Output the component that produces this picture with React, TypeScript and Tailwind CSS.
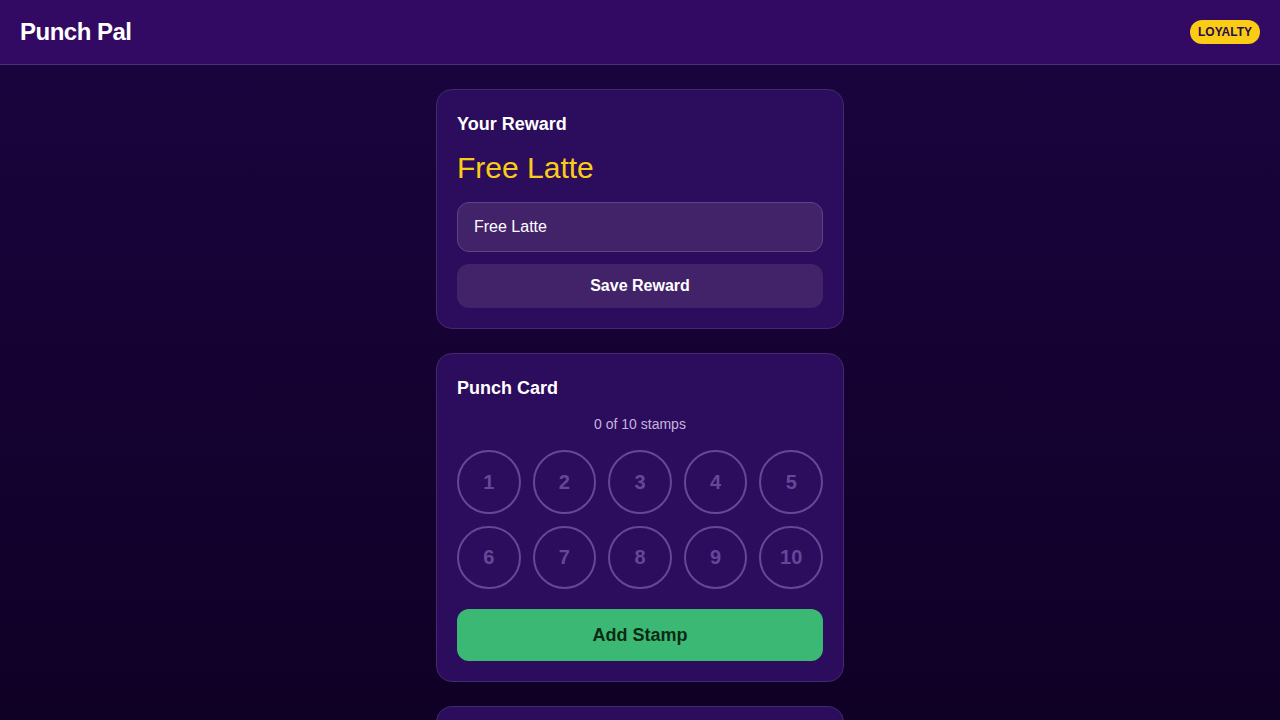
const STAMPS = [1, 2, 3, 4, 5, 6, 7, 8, 9, 10];

export default function App() {
  return (
    <div
      className="min-h-screen bg-gradient-to-b from-[#1b0540] to-[#0e0022] text-white"
      style={{ fontFamily: '"Liberation Sans", Arial, sans-serif' }}
    >
      <header className="flex h-[65px] items-center justify-between border-b border-[#4d2f7a] bg-[#330a63] px-5">
        <h1 className="text-[24px] font-bold tracking-[-0.5px]">Punch Pal</h1>
        <span className="rounded-full bg-[#facc15] px-2 py-[4px] text-[12px] font-bold leading-[16px] text-[#2a0b4a]">
          LOYALTY
        </span>
      </header>

      <main className="mx-auto flex w-[408px] flex-col gap-6 pt-6">
        <section className="rounded-2xl border border-[#44286e] bg-[#2c0c5c] p-5">
          <h2 className="text-[18px] font-bold leading-[28px]">Your Reward</h2>
          <p className="mt-3 text-[30px] leading-[36px] text-[#facc15]">Free Latte</p>
          <input
            defaultValue="Free Latte"
            className="mt-4 h-[50px] w-full rounded-xl border border-[#5e4389] bg-[#42236a] px-4 text-[16px] text-white outline-none"
          />
          <button className="mt-3 h-[44px] w-full rounded-xl bg-[#42236a] text-[16px] font-bold">
            Save Reward
          </button>
        </section>

        <section className="rounded-2xl border border-[#44286e] bg-[#2c0c5c] p-5">
          <h2 className="text-[18px] font-bold leading-[28px]">Punch Card</h2>
          <p className="mt-3 text-center text-[14px] leading-[20px] text-[#c4b5dc]">0 of 10 stamps</p>
          <div className="mt-4 grid grid-cols-5 gap-3">
            {STAMPS.map((n) => (
              <div
                key={n}
                className="flex aspect-square items-center justify-center rounded-full border-2 border-[#65479a] text-[20px] font-bold text-[#65479a]"
              >
                {n}
              </div>
            ))}
          </div>
          <button className="mt-5 h-[52px] w-full rounded-xl bg-[#3bb974] text-[18px] font-bold text-[#0b2a14]">
            Add Stamp
          </button>
        </section>

        <section className="h-[120px] rounded-2xl border border-[#44286e] bg-[#2c0c5c]" />
      </main>
    </div>
  );
}
